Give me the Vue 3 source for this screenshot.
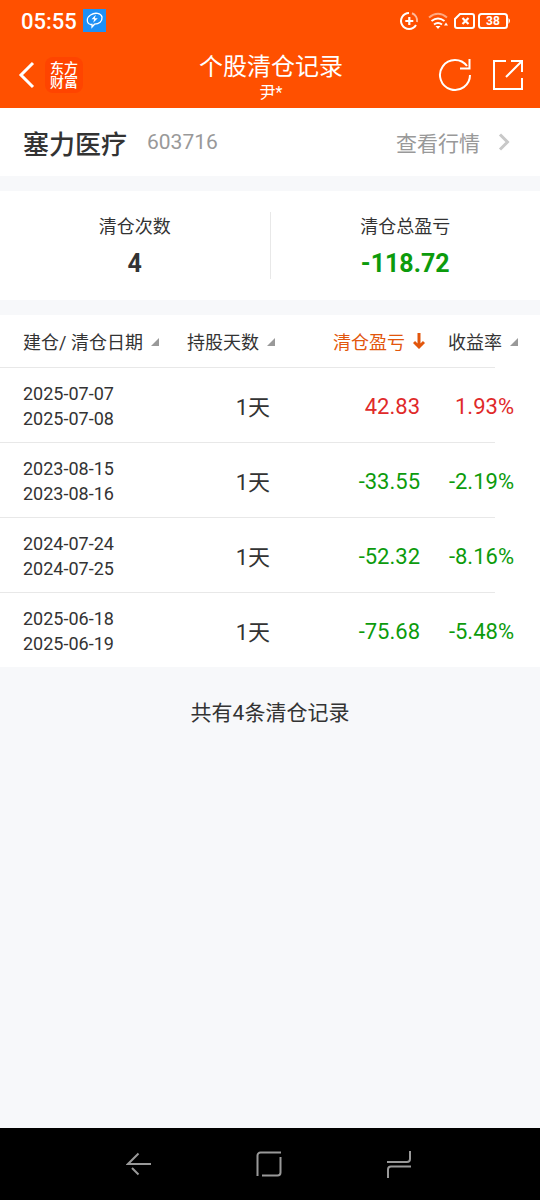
<script setup>
import { ref, computed } from "vue";

const stock = { name: "塞力医疗", code: "603716" };

const records = [
  { open: "2025-07-07", close: "2025-07-08", days: 1, profit: 42.83, rate: 1.93 },
  { open: "2023-08-15", close: "2023-08-16", days: 1, profit: -33.55, rate: -2.19 },
  { open: "2024-07-24", close: "2024-07-25", days: 1, profit: -52.32, rate: -8.16 },
  { open: "2025-06-18", close: "2025-06-19", days: 1, profit: -75.68, rate: -5.48 },
];

const columns = [
  { key: "close", title: "建仓/ 清仓日期" },
  { key: "days", title: "持股天数" },
  { key: "profit", title: "清仓盈亏" },
  { key: "rate", title: "收益率" },
];

const sortKey = ref("profit");

const sorted = computed(() =>
  [...records].sort((a, b) => (a[sortKey.value] < b[sortKey.value] ? 1 : -1))
);

const total = computed(() => records.reduce((sum, r) => sum + r.profit, 0));

const tone = (n) => (n < 0 ? "down" : "up");
</script>

<template>
  <div class="page">
    <header class="top">
      <div class="status">
        <span class="time">05:55</span>
        <svg class="app-badge" width="24" height="24" viewBox="0 0 24 24">
          <rect width="23" height="23" fill="#1e90f5" />
          <path
            d="M7.500 15.500C3 14 3.500 8.500 7.500 6C12 3 18 4 19 8C19.500 12.500 16 15 11.500 15.200L9 18V15.500Z"
            fill="none"
            stroke="#fff"
            stroke-width="1.3"
          />
          <path d="M12.800 5.800l-4.300 4.400h2.700l-1 3.600 4.600-4.600h-3z" fill="#fff" />
        </svg>
        <svg class="status-icons" width="112" height="22" viewBox="0 0 112 22">
          <g fill="none" stroke="#fff" stroke-width="2">
            <path d="M9 3A8 8 0 1 0 16 15" />
            <path d="M12 3.300A8 8 0 0 1 17 12" opacity="0.6" />
            <path d="M9.300 7v8M5.300 11h8" stroke-width="2.200" />
            <path d="M29 7.500Q38 0 47 7.500" opacity="0.5" />
            <path d="M31.500 11Q38 6 44.500 11" />
            <path d="M34 14.500Q38 11.500 42 14.500" />
            <path d="M60 4h12a2 2 0 0 1 2 2v10a2 2 0 0 1-2 2H57a2 2 0 0 1-2-2V9z" />
            <path d="M62.500 8l6 6M68.500 8l-6 6" stroke-width="2.200" />
            <rect x="79" y="4" width="28" height="14" rx="2.500" />
          </g>
          <path d="M35.500 16h5L38 19zM44 15.500l2-3 2 3z" fill="#fff" />
          <path d="M108.500 8q3 2.500 0 6z" fill="#fff" />
          <text x="93" y="15" class="battery">38</text>
        </svg>
      </div>
      <div class="bar">
        <div class="side">
          <button class="icon-btn" aria-label="返回">
            <svg width="17" height="28" viewBox="0 0 17 28">
              <path d="M15 2L3 14L15 26" fill="none" stroke="#fff" stroke-width="3" />
            </svg>
          </button>
          <span class="logo">东方<br />财富</span>
        </div>
        <div class="heading">
          <h1>个股清仓记录</h1>
          <p>尹*</p>
        </div>
        <div class="side right">
          <button class="icon-btn" aria-label="刷新">
            <svg width="34" height="34" viewBox="0 0 34 34" fill="none" stroke="#fff" stroke-width="2">
              <path d="M32 17A15 15 0 1 1 29 8" />
              <path d="M31.500 1V10.500H22" />
            </svg>
          </button>
          <button class="icon-btn" aria-label="分享">
            <svg width="32" height="32" viewBox="0 0 32 32" fill="none" stroke="#fff" stroke-width="2">
              <path d="M14 2H2V30H30V19" />
              <path d="M19 2H30V13M30 2L14 18" />
            </svg>
          </button>
        </div>
      </div>
    </header>

    <main>
      <section class="stock">
        <h2>{{ stock.name }}</h2>
        <span class="code">{{ stock.code }}</span>
        <a class="quote" href="#">
          查看行情
          <svg width="12" height="18" viewBox="0 0 12 18">
            <path d="M2 1.500L9.500 9L2 16.500" fill="none" stroke="#c8c8c8" stroke-width="3" />
          </svg>
        </a>
      </section>

      <section class="summary">
        <div class="stat">
          <span>清仓次数</span>
          <strong>{{ records.length }}</strong>
        </div>
        <div class="stat">
          <span>清仓总盈亏</span>
          <strong :class="tone(total)">{{ total.toFixed(2) }}</strong>
        </div>
      </section>

      <table class="records">
        <thead>
          <tr>
            <th v-for="col in columns" :key="col.key" scope="col">
              <button
                class="sort"
                :class="{ active: sortKey === col.key }"
                @click="sortKey = col.key"
              >
                {{ col.title }}
                <svg v-if="sortKey === col.key" width="12" height="18" viewBox="0 0 12 18">
                  <path
                    d="M6 1V15M1 10L6 15L11 10"
                    fill="none"
                    stroke="#e2560c"
                    stroke-width="3"
                  />
                </svg>
                <svg v-else class="corner" width="8" height="8" viewBox="0 0 8 8">
                  <path d="M8 0V8H0Z" fill="#999" />
                </svg>
              </button>
            </th>
          </tr>
        </thead>
        <tbody>
          <tr v-for="row in sorted" :key="row.close">
            <td class="dates">{{ row.open }}<br />{{ row.close }}</td>
            <td class="days">{{ row.days }}天</td>
            <td :class="tone(row.profit)">{{ row.profit.toFixed(2) }}</td>
            <td :class="tone(row.rate)">{{ row.rate.toFixed(2) }}%</td>
          </tr>
        </tbody>
      </table>

      <p class="count">共有{{ records.length }}条清仓记录</p>
    </main>

    <nav class="system">
      <button class="icon-btn" aria-label="后退">
        <svg width="26" height="26" viewBox="0 0 26 26">
          <path d="M25 13H2L12.500 2.500M6 17L12.500 23.500" />
        </svg>
      </button>
      <button class="icon-btn" aria-label="主页">
        <svg width="26" height="26" viewBox="0 0 26 26">
          <path d="M1.500 25V4.500a3 3 0 0 1 3-3H25M24.500 6V21.500a3 3 0 0 1-3 3H6" />
        </svg>
      </button>
      <button class="icon-btn" aria-label="最近任务">
        <svg width="26" height="28" viewBox="0 0 26 28">
          <path d="M1 12H21a3 3 0 0 0 3-3V1M25 16.500H5a3 3 0 0 0-3 3V28" />
        </svg>
      </button>
    </nav>
  </div>
</template>

<style>
body {
  margin: 0;
  background: #f7f8fa;
}
</style>

<style scoped>
.page {
  display: flex;
  flex-direction: column;
  min-height: 100vh;
  color: #333;
  font-family: Roboto, "Noto Sans CJK SC", sans-serif;
}

h1,
h2,
p {
  margin: 0;
  font-weight: 400;
}

svg {
  display: block;
}

button {
  padding: 0;
  border: none;
  background: transparent;
  color: inherit;
  font: inherit;
  cursor: pointer;
}

.top {
  background: #ff5000;
  color: #fff;
}

.status {
  display: flex;
  align-items: center;
  height: 42px;
  padding: 0 28px 0 21px;
}

.time {
  font-size: 22px;
  font-weight: 500;
}

.app-badge {
  margin-left: 6px;
}

.status-icons {
  margin-left: auto;
}

.battery {
  fill: #fff;
  font-size: 12px;
  font-weight: 700;
  text-anchor: middle;
}

.bar {
  display: flex;
  align-items: center;
  height: 66px;
  padding: 0 16px 0 18px;
}

.side {
  display: flex;
  flex: 1;
  align-items: center;
  gap: 10px;
}

.right {
  justify-content: flex-end;
  gap: 20px;
}

.logo {
  padding: 4px 5px;
  border-radius: 8px;
  background: #ff4400;
  font-size: 14px;
  font-weight: 500;
  line-height: 14px;
}

.heading {
  padding-top: 4px;
  text-align: center;
}

.heading h1 {
  font-size: 24px;
  line-height: 32px;
}

.heading p {
  font-size: 16px;
  line-height: 20px;
}

.stock {
  display: flex;
  align-items: center;
  height: 68px;
  padding: 0 30px 0 23px;
  background: #fff;
}

.stock h2 {
  font-size: 26px;
  font-weight: 500;
}

.code {
  margin-left: 20px;
  color: #999;
  font-size: 21px;
}

.quote {
  display: flex;
  align-items: center;
  gap: 18px;
  margin-left: auto;
  color: #999;
  font-size: 21px;
  text-decoration: none;
}

.summary {
  display: flex;
  margin: 15px 0;
  padding: 21px 0;
  background: #fff;
}

.stat {
  display: flex;
  flex: 1;
  flex-direction: column;
  align-items: center;
  gap: 7px;
}

.stat + .stat {
  border-left: 1px solid #e8e8e8;
}

.stat span {
  font-size: 18px;
  line-height: 30px;
}

.stat strong {
  font-size: 25px;
  line-height: 30px;
}

.records {
  width: 100%;
  border-collapse: collapse;
  table-layout: fixed;
  background: #fff;
}

.records th {
  height: 52px;
  padding: 0;
  font-size: 18px;
  font-weight: 400;
  text-align: right;
}

.records th:first-child {
  padding-left: 23px;
  text-align: left;
}

.records th:nth-child(2) {
  width: 108px;
}

.records th:nth-child(3) {
  width: 150px;
}

.records th:last-child {
  width: 93px;
  padding-right: 22px;
}

.sort {
  display: inline-flex;
  align-items: center;
  gap: 8px;
  white-space: nowrap;
}

.corner {
  margin-top: 2px;
}

.active {
  color: #e2560c;
}

.records tbody tr {
  background: linear-gradient(#e8e8e8, #e8e8e8) no-repeat 0 0 / calc(100% - 45px) 1px;
}

.records td {
  height: 75px;
  padding: 3px 5px 0 0;
  box-sizing: border-box;
  font-size: 22px;
  text-align: right;
}

.records td:last-child {
  padding-right: 26px;
}

.records .dates {
  padding-left: 23px;
  font-size: 18px;
  line-height: 25px;
  text-align: left;
}

.records .days {
  padding-top: 0;
}

.up {
  color: #e02a2a;
}

.down {
  color: #0c9b0c;
}

.count {
  padding: 30px 0;
  font-size: 21px;
  line-height: 32px;
  text-align: center;
}

.system {
  display: flex;
  align-items: center;
  justify-content: space-between;
  height: 72px;
  margin-top: auto;
  padding: 0 128px 0 126px;
  background: #000;
}

.system path {
  fill: none;
  stroke: #999;
  stroke-width: 2;
}
</style>
